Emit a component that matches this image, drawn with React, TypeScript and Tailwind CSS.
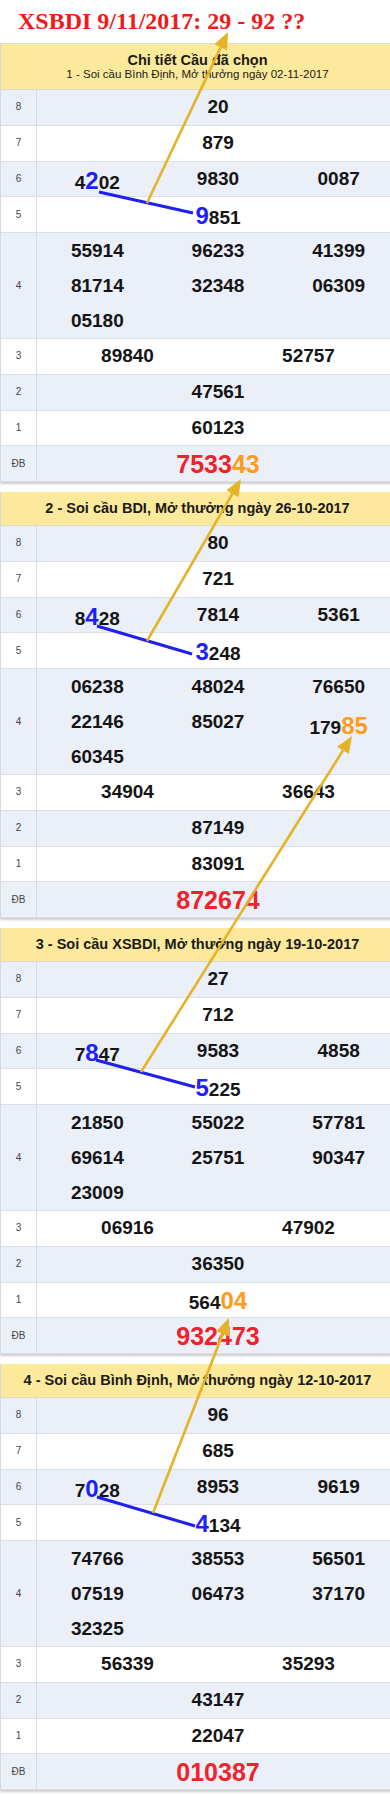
import React from 'react';

type Soi = {
    head: string;
    sub?: string;
    r8: string;
    r7: string;
    r6: [string, string, string];
    r5: string;
    r4: [string[], string[], string[]];
    r3: [string, string];
    r2: string;
    r1: string;
    db: string;
};

// [x] = blue digit, {x} = orange digit
const tables: Soi[] = [
    {
        head: 'Chi tiết Cầu đã chọn',
        sub: '1 - Soi cầu Bình Định, Mở thưởng ngày 02-11-2017',
        r8: '20',
        r7: '879',
        r6: ['4[2]02', '9830', '0087'],
        r5: '[9]851',
        r4: [['55914', '81714', '05180'], ['96233', '32348'], ['41399', '06309']],
        r3: ['89840', '52757'],
        r2: '47561',
        r1: '60123',
        db: '7533{43}',
    },
    {
        head: '2 - Soi cầu BDI, Mở thưởng ngày 26-10-2017',
        r8: '80',
        r7: '721',
        r6: ['8[4]28', '7814', '5361'],
        r5: '[3]248',
        r4: [['06238', '22146', '60345'], ['48024', '85027'], ['76650', '179{85}']],
        r3: ['34904', '36643'],
        r2: '87149',
        r1: '83091',
        db: '872674',
    },
    {
        head: '3 - Soi cầu XSBDI, Mở thưởng ngày 19-10-2017',
        r8: '27',
        r7: '712',
        r6: ['7[8]47', '9583', '4858'],
        r5: '[5]225',
        r4: [['21850', '69614', '23009'], ['55022', '25751'], ['57781', '90347']],
        r3: ['06916', '47902'],
        r2: '36350',
        r1: '564{04}',
        db: '932473',
    },
    {
        head: '4 - Soi cầu Bình Định, Mở thưởng ngày 12-10-2017',
        r8: '96',
        r7: '685',
        r6: ['7[0]28', '8953', '9619'],
        r5: '[4]134',
        r4: [['74766', '07519', '32325'], ['38553', '06473'], ['56501', '37170']],
        r3: ['56339', '35293'],
        r2: '43147',
        r1: '22047',
        db: '010387',
    },
];

const hasMark = (v: string) => /[[{]/.test(v);

const Num = ({ v, special }: { v: string; special?: boolean }) => {
    const parts = v.split(/(\[[0-9]+\]|\{[0-9]+\})/).filter(Boolean);
    return (
        <>
            {parts.map((p, i) => {
                if (p.startsWith('['))
                    return <span key={i} className="text-[24px] leading-none text-[#1f1ffa]">{p.slice(1, -1)}</span>;
                if (p.startsWith('{'))
                    return (
                        <span key={i} className={`${special ? '' : 'text-[24px]'} leading-none text-[#ff9c1c]`}>
                            {p.slice(1, -1)}
                        </span>
                    );
                return <span key={i}>{p}</span>;
            })}
        </>
    );
};

const Row = ({ label, shade, tall, children }: { label: string; shade?: boolean; tall?: boolean; children: React.ReactNode }) => (
    <div className={`flex border-b border-[#dbe0e8] ${tall ? 'h-[106px]' : 'h-[35.75px]'} ${shade ? 'bg-[#eaeff8]' : 'bg-white'}`}>
        <div className="w-[36px] shrink-0 border-r border-[#d6dce6] flex items-center justify-center text-[10px] leading-none text-[#454545]">
            {label}
        </div>
        <div className="flex-1 text-[19px] font-bold text-[#151515]">{children}</div>
    </div>
);

const Line = ({ v }: { v: string }) => (
    <div className={`text-center leading-[34.75px] ${hasMark(v) ? 'pt-[4px]' : ''}`}>
        <Num v={v} />
    </div>
);

const SoiTable = ({ t }: { t: Soi }) => (
    <div className="w-[399px] mb-[10px] border-l border-[#d3d9e3] shadow-[0_2px_2px_rgba(0,0,0,0.2)]">
        {/* Header */}
        {t.sub ? (
            <div className="h-[47px] pr-[5px] bg-[#fde99b] border-t border-b border-[#dcdcc8] flex flex-col items-center justify-center text-[#1a1a1a]">
                <div className="text-[14.5px] leading-[16px] font-bold">{t.head}</div>
                <div className="text-[11.5px] leading-[13px]">{t.sub}</div>
            </div>
        ) : (
            <div className="h-[34px] pr-[5px] bg-[#fde99b] border-b border-[#dcdcc8] flex items-center justify-center text-[14.5px] font-bold text-[#1a1a1a]">
                {t.head}
            </div>
        )}

        <Row label="8" shade><Line v={t.r8} /></Row>
        <Row label="7"><Line v={t.r7} /></Row>
        <Row label="6" shade>
            <div className="grid grid-cols-3">
                {t.r6.map((v, i) => <Line key={i} v={v} />)}
            </div>
        </Row>
        <Row label="5"><Line v={t.r5} /></Row>
        <Row label="4" shade tall>
            <div className="grid grid-cols-3">
                {t.r4.map((col, i) => (
                    <div key={i}>
                        {col.map((v, j) => (
                            <div key={j} className={`text-center leading-[35px] ${hasMark(v) ? 'pt-[6px]' : ''}`}>
                                <Num v={v} />
                            </div>
                        ))}
                    </div>
                ))}
            </div>
        </Row>
        <Row label="3">
            <div className="grid grid-cols-2">
                {t.r3.map((v, i) => <Line key={i} v={v} />)}
            </div>
        </Row>
        <Row label="2" shade><Line v={t.r2} /></Row>
        <Row label="1">
            <div className={`text-center leading-[34.75px] ${hasMark(t.r1) ? 'pt-[3px]' : ''}`}>
                <Num v={t.r1} />
            </div>
        </Row>
        <Row label="ĐB" shade>
            <div className="text-center leading-[34.75px] pt-[1px] text-[25px] text-[#ee232b]">
                <Num v={t.db} special />
            </div>
        </Row>
    </div>
);

const blueLines = [
    [99, 192, 193, 213],
    [97, 626, 192, 654],
    [96, 1060, 195, 1087],
    [97, 1497, 195, 1526],
];

const arrows = [
    [147, 203, 228, 32],
    [147, 641, 241, 479],
    [141, 1072, 352, 736],
    [153, 1513, 229, 1318],
];

const Arrow = ({ a }: { a: number[] }) => {
    const [x1, y1, x2, y2] = a;
    const len = Math.hypot(x2 - x1, y2 - y1);
    const ux = (x2 - x1) / len;
    const uy = (y2 - y1) / len;
    const L = 17;
    const W = 7;
    const bx = x2 - ux * L;
    const by = y2 - uy * L;
    const pts = `${x2},${y2} ${bx - uy * W},${by + ux * W} ${bx + uy * W},${by - ux * W}`;
    return (
        <g>
            <line x1={x1} y1={y1} x2={bx} y2={by} stroke="#e4b327" strokeWidth={2.6} />
            <polygon points={pts} fill="#e4b327" />
        </g>
    );
};

export default function App() {
    return (
        <div className="relative w-[390px] h-[1794px] overflow-hidden bg-white font-['Liberation_Sans',Arial,sans-serif]">
            <div className="h-[43px] pl-[18px] leading-[43px] whitespace-nowrap font-['Liberation_Serif',serif] font-bold text-[24px] text-[#f01a1a]">
                XSBDI 9/11/2017: 29 - 92 ??
            </div>

            {tables.map((t, i) => (
                <SoiTable key={i} t={t} />
            ))}

            {/* Pattern lines drawn over the tables */}
            <svg className="absolute left-0 top-0 pointer-events-none" width={390} height={1794}>
                {blueLines.map(([x1, y1, x2, y2], i) => (
                    <line key={i} x1={x1} y1={y1} x2={x2} y2={y2} stroke="#1f1ff0" strokeWidth={3} />
                ))}
                {arrows.map((a, i) => (
                    <Arrow key={i} a={a} />
                ))}
            </svg>
        </div>
    );
}
